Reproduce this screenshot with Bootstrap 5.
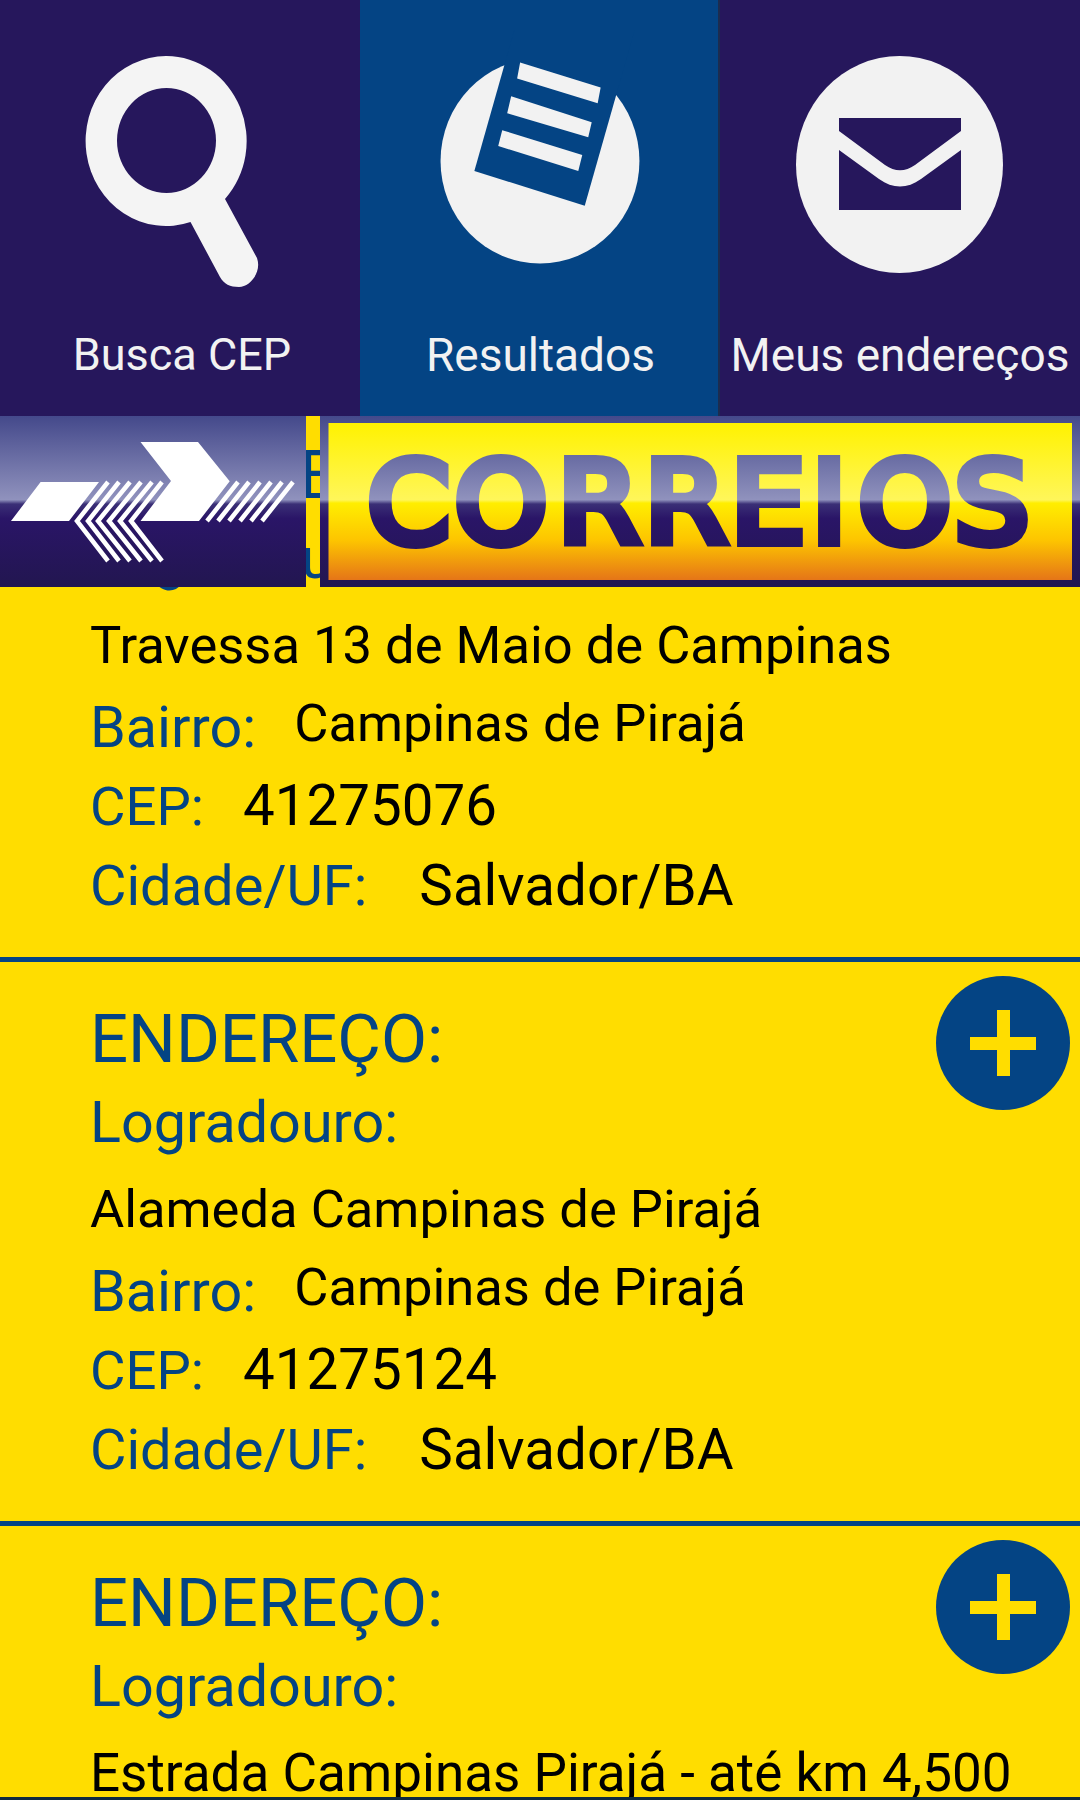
<!doctype html>
<html lang="pt">
<head>
<meta charset="utf-8">
<title>Correios</title>
<link href="https://cdn.jsdelivr.net/npm/bootstrap@5.3.0/dist/css/bootstrap.min.css" rel="stylesheet">
<style>
body{margin:0;background:#ffdd00;font-family:Roboto,"Liberation Sans",sans-serif;width:1080px;height:1800px;overflow:hidden}
.tabbar{height:416px}
.tabcell{background:#26175c;color:#f2f2f2;flex:0 0 360px;height:416px;position:relative}
.tabcell.tab-on{background:#044484;flex:0 0 358px;border-right:2px solid #1c2c50}
.tabcell svg{display:block;height:320px}
.tablabel{font-size:46px;line-height:54px;margin-top:8px;text-align:center;white-space:nowrap}
.label-narrow{font-size:45px;padding-left:4px}
.label-nudge{padding-left:3px}
.stage{height:1381px;overflow:hidden;position:relative;background:#ffdd00}
.endline{height:3px;background:#0f2a3f}
.logobar{position:absolute;left:0;right:0;top:0;height:171px}
.logobar svg{display:block;position:absolute;top:0}
.feed{margin-top:-18px}
.entry{height:564px;padding:41px 90px 0 90px;position:relative;border-bottom:5px solid #044484;color:#000}
.head-word{font-size:67px;line-height:72px;color:#044484;margin-bottom:8px}
.fieldline{line-height:80px;height:80px;white-space:nowrap;display:flex}
.fieldline.row-short{height:78px}
.fieldname{color:#044484;font-size:57.500px}
.fieldname.name-mid{font-size:56px}
.fieldname.name-tight{font-size:54.500px}
.valtext{color:#000;font-size:52.500px}
.valtext.val-large{font-size:56.500px}
.valtext.val-long{font-size:53px}
.valrow{margin-top:6px;margin-bottom:3px}
.valup{margin-top:-5px}
.gap-near{margin-left:38px}
.gap-cep{margin-left:39px}
.gap-far{margin-left:52px}
.plusbtn{position:absolute;right:10px;top:14px;width:134px;height:134px;border-radius:50%;background:#044484}
.plusbtn::before,.plusbtn::after{content:"";position:absolute;background:#ffdd00}
.plusbtn::before{left:34px;top:61px;width:66px;height:13px}
.plusbtn::after{left:61px;top:34px;width:13px;height:66px}
</style>
</head>
<body>
<div class="d-flex tabbar">
  <div class="tabcell">
    <svg viewBox="0 0 360 320" width="360"><path fill="#f4f4f4" fill-rule="evenodd" d="M166.500 56A80.500 85 0 0 1 225 199L257 258C262 272 250 287 239 287C230 287 224 284 220 277L190.500 222A80.500 85 0 1 1 166.500 56ZM166.500 88A49.500 52.500 0 0 0 166.500 193A49.500 52.500 0 0 0 166.500 88Z"/></svg>
    <div class="tablabel label-narrow">Busca CEP</div>
  </div>
  <div class="tabcell tab-on">
    <svg viewBox="360 0 360 320" width="358"><ellipse cx="541" cy="161" rx="100" ry="103" fill="#f2f2f2"/><path fill="#044484" d="M515 30L636 30L586 206L475 171Z"/><path fill="#f2f2f2" d="M521 62L602 87L599 103L518 78ZM512 96L593 122L589.500 137L508 113ZM503 130L583.500 155L579.500 171L499 146Z"/></svg>
    <div class="tablabel label-nudge">Resultados</div>
  </div>
  <div class="tabcell">
    <svg viewBox="720 0 360 320" width="360"><ellipse cx="899.500" cy="164.500" rx="103.500" ry="108.500" fill="#f2f2f2"/><path fill="#26175c" d="M839 118H961V131L915 165C905 172 895 172 885 165L839 131ZM839 150V210H961V150L921 179C907 189 893 189 879 179Z"/></svg>
    <div class="tablabel">Meus endereços</div>
  </div>
</div>
<div class="stage">
  <div class="feed">
    <div class="entry">
      <div class="head-word">ENDEREÇO:</div>
      <div class="fieldline"><span class="fieldname">Logradouro:</span></div>
      <div class="fieldline valtext valrow">Travessa 13 de Maio de Campinas</div>
      <div class="fieldline row-short"><span class="fieldname">Bairro:</span><span class="valtext gap-near valup">Campinas de Pirajá</span></div>
      <div class="fieldline"><span class="fieldname name-tight">CEP:</span><span class="valtext val-large gap-cep">41275076</span></div>
      <div class="fieldline"><span class="fieldname name-mid">Cidade/UF:</span><span class="valtext val-large gap-far">Salvador/BA</span></div>
    </div>
    <div class="entry">
      <div class="plusbtn"></div>
      <div class="head-word">ENDEREÇO:</div>
      <div class="fieldline"><span class="fieldname">Logradouro:</span></div>
      <div class="fieldline valtext valrow">Alameda Campinas de Pirajá</div>
      <div class="fieldline row-short"><span class="fieldname">Bairro:</span><span class="valtext gap-near valup">Campinas de Pirajá</span></div>
      <div class="fieldline"><span class="fieldname name-tight">CEP:</span><span class="valtext val-large gap-cep">41275124</span></div>
      <div class="fieldline"><span class="fieldname name-mid">Cidade/UF:</span><span class="valtext val-large gap-far">Salvador/BA</span></div>
    </div>
    <div class="entry">
      <div class="plusbtn"></div>
      <div class="head-word">ENDEREÇO:</div>
      <div class="fieldline"><span class="fieldname">Logradouro:</span></div>
      <div class="fieldline valtext val-long valrow">Estrada Campinas Pirajá - até km 4,500</div>
    </div>
  </div>
  <div class="logobar">
    <svg width="306" height="171" viewBox="0 416 306 171" style="left:0">
      <defs>
        <linearGradient id="pg" gradientUnits="userSpaceOnUse" x1="0" y1="416" x2="0" y2="587">
          <stop offset="0" stop-color="#44498b"/><stop offset=".49" stop-color="#9092bd"/><stop offset=".515" stop-color="#3a2f76"/><stop offset=".6" stop-color="#2a1567"/><stop offset="1" stop-color="#221650"/>
        </linearGradient>
      </defs>
      <rect x="0" y="416" width="306" height="171" fill="url(#pg)"/>
      <path fill="#fff" d="M140.500 442H198L229.700 481.300L199 521H140.500L171 481ZM40.600 482H99L69 521H11Z"/>
      <g fill="none" stroke="#fff" stroke-width="4.500">
        <path d="M108 482L77 521L108 561M119 482L88 521L119 561M130 482L98 521L130 561M141 482L109 521L141 561M152 482L120 521L152 561M162 482L131 521L162 561"/>
        <path d="M238 482L207 521M249 482L218 521M260 482L229 521M271 482L240 521M282 482L251 521M293 482L262 521"/>
      </g>
    </svg>
    <svg width="760" height="171" viewBox="320 416 760 171" style="left:320px">
      <defs>
        <linearGradient id="pg2" gradientUnits="userSpaceOnUse" x1="0" y1="416" x2="0" y2="587">
          <stop offset="0" stop-color="#44498b"/><stop offset=".49" stop-color="#9092bd"/><stop offset=".515" stop-color="#3a2f76"/><stop offset=".6" stop-color="#2a1567"/><stop offset="1" stop-color="#221650"/>
        </linearGradient>
        <linearGradient id="yg" gradientUnits="userSpaceOnUse" x1="0" y1="423" x2="0" y2="580">
          <stop offset="0" stop-color="#fff200"/><stop offset=".49" stop-color="#fff65a"/><stop offset=".51" stop-color="#ffee00"/><stop offset=".75" stop-color="#fdc400"/><stop offset="1" stop-color="#e57518"/>
        </linearGradient>
      </defs>
      <rect x="320" y="416" width="760" height="171" fill="url(#pg2)"/>
      <rect x="328.500" y="423" width="743.500" height="157" fill="url(#yg)"/>
      <text transform="scale(1.05,1)" x="350.100 433 531.100 614 695.900 773 817.700 909" y="542" font-family="DejaVu Sans" font-size="112" fill="url(#pg2)" stroke="url(#pg2)" stroke-width="10">CORREIOS</text>
    </svg>
  </div>
</div>
<div class="endline"></div>
</body>
</html>
